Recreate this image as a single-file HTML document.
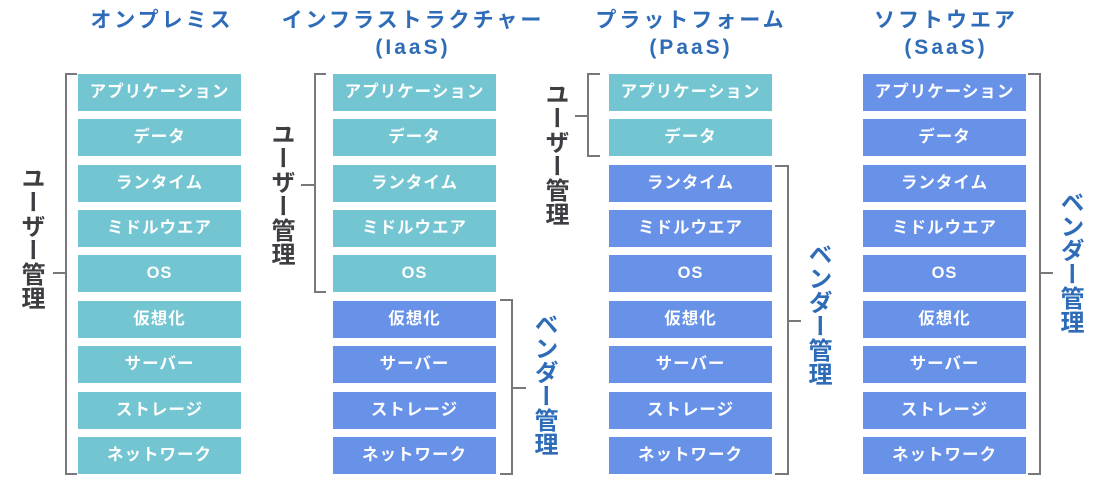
<!DOCTYPE html>
<html><head><meta charset="utf-8"><style>
*{margin:0;padding:0;box-sizing:border-box}
body{width:1101px;height:482px;background:#fff;position:relative;overflow:hidden;font-family:"Liberation Sans","Noto Sans CJK JP",sans-serif}
.b{position:absolute;width:163px;height:37px;color:#fff;font-weight:bold;font-size:16.5px;letter-spacing:1px;text-align:center;line-height:37px}
.t{background:#73c5d1}.v{background:#6891e8}
.c1{left:78px}.c2{left:333px}.c3{left:609px}.c4{left:863px}
.r1{top:74px}.r2{top:119px}.r3{top:165px}.r4{top:210px}.r5{top:255px}.r6{top:301px}.r7{top:346px}.r8{top:392px}.r9{top:437px}
.h{position:absolute;color:#2f6cb8;font-weight:bold;font-size:21px;letter-spacing:3px;text-align:center;line-height:27px;width:320px}
.l{position:absolute;border:2px solid #77777c}
.k{position:absolute;height:2px;background:#77777c}
.vt{position:absolute;writing-mode:vertical-rl;font-weight:bold;font-size:24px;line-height:24px;width:24px}
.u{color:#3d3d42}.vd{color:#2f6cb8}
</style></head><body>
<div class="h" style="left:2px;top:7px">オンプレミス</div>
<div class="h" style="left:253px;top:7px">インフラストラクチャー<br>(IaaS)</div>
<div class="h" style="left:531px;top:7px">プラットフォーム<br>(PaaS)</div>
<div class="h" style="left:786px;top:7px">ソフトウエア<br>(SaaS)</div>

<div class="b t c1 r1">アプリケーション</div><div class="b t c1 r2">データ</div><div class="b t c1 r3">ランタイム</div><div class="b t c1 r4">ミドルウエア</div><div class="b t c1 r5">OS</div><div class="b t c1 r6">仮想化</div><div class="b t c1 r7">サーバー</div><div class="b t c1 r8">ストレージ</div><div class="b t c1 r9">ネットワーク</div>

<div class="b t c2 r1">アプリケーション</div><div class="b t c2 r2">データ</div><div class="b t c2 r3">ランタイム</div><div class="b t c2 r4">ミドルウエア</div><div class="b t c2 r5">OS</div><div class="b v c2 r6">仮想化</div><div class="b v c2 r7">サーバー</div><div class="b v c2 r8">ストレージ</div><div class="b v c2 r9">ネットワーク</div>

<div class="b t c3 r1">アプリケーション</div><div class="b t c3 r2">データ</div><div class="b v c3 r3">ランタイム</div><div class="b v c3 r4">ミドルウエア</div><div class="b v c3 r5">OS</div><div class="b v c3 r6">仮想化</div><div class="b v c3 r7">サーバー</div><div class="b v c3 r8">ストレージ</div><div class="b v c3 r9">ネットワーク</div>

<div class="b v c4 r1">アプリケーション</div><div class="b v c4 r2">データ</div><div class="b v c4 r3">ランタイム</div><div class="b v c4 r4">ミドルウエア</div><div class="b v c4 r5">OS</div><div class="b v c4 r6">仮想化</div><div class="b v c4 r7">サーバー</div><div class="b v c4 r8">ストレージ</div><div class="b v c4 r9">ネットワーク</div>

<div class="l" style="left:65px;top:73px;width:12px;height:402px;border-right:none"></div>
<div class="k" style="left:53px;top:272px;width:13px"></div>
<div class="vt u" style="left:18px;top:166px">ユーザー管理</div>

<div class="l" style="left:314px;top:73px;width:12px;height:220px;border-right:none"></div>
<div class="k" style="left:301px;top:184px;width:14px"></div>
<div class="vt u" style="left:268px;top:122px">ユーザー管理</div>
<div class="l" style="left:500px;top:299px;width:13px;height:176px;border-left:none"></div>
<div class="k" style="left:512px;top:387px;width:14px"></div>
<div class="vt vd" style="left:531px;top:312px">ベンダー管理</div>

<div class="l" style="left:587px;top:73px;width:13px;height:84px;border-right:none"></div>
<div class="k" style="left:575px;top:115px;width:13px"></div>
<div class="vt u" style="left:542px;top:82px">ユーザー管理</div>
<div class="l" style="left:775px;top:165px;width:14px;height:310px;border-left:none"></div>
<div class="k" style="left:788px;top:320px;width:13px"></div>
<div class="vt vd" style="left:805px;top:242px">ベンダー管理</div>

<div class="l" style="left:1028px;top:73px;width:13px;height:402px;border-left:none"></div>
<div class="k" style="left:1040px;top:272px;width:13px"></div>
<div class="vt vd" style="left:1057px;top:190px">ベンダー管理</div>
</body></html>
